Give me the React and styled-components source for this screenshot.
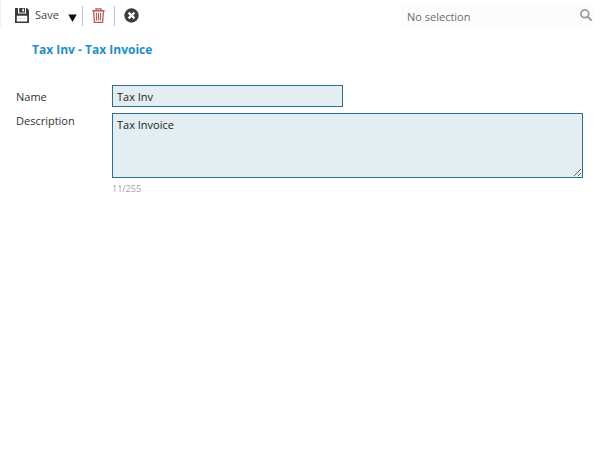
import React, { useState } from "react";
import styled, { createGlobalStyle } from "styled-components";

const MAX_LENGTH = 255;

function App() {
  const [name, setName] = useState("Tax Inv");
  const [description, setDescription] = useState("Tax Invoice");
  return (
    <>
      <GlobalStyle />
      <Toolbar>
        <Actions>
          <SaveButton type="button">
            <SaveIcon />
            Save
          </SaveButton>
          <ArrowButton type="button" aria-label="Save options">
            <svg width="9" height="8" viewBox="0 0 9 8">
              <path d="M0.3 0.5h8.4L4.5 8z" fill="#111" />
            </svg>
          </ArrowButton>
          <Divided>
            <IconButton type="button" aria-label="Delete">
              <TrashIcon />
            </IconButton>
          </Divided>
          <IconButton type="button" aria-label="Close">
            <CloseIcon />
          </IconButton>
        </Actions>
        <Search>
          <SearchInput placeholder="No selection" aria-label="Search" />
          <SearchButton type="button" aria-label="Find">
            <SearchIcon />
          </SearchButton>
        </Search>
      </Toolbar>
      <Title>Tax Inv - Tax Invoice</Title>
      <Form>
        <Label htmlFor="name">Name</Label>
        <NameInput
          id="name"
          value={name}
          onChange={(e) => setName(e.target.value)}
        />
        <Label htmlFor="description">Description</Label>
        <div>
          <DescriptionInput
            id="description"
            maxLength={MAX_LENGTH}
            value={description}
            onChange={(e) => setDescription(e.target.value)}
          />
          <Counter>
            {description.length}/{MAX_LENGTH}
          </Counter>
        </div>
      </Form>
    </>
  );
}

function SaveIcon() {
  return (
    <svg width="14" height="15" viewBox="0 0 14 15">
      <path
        fill="#3b3b3f"
        fillRule="evenodd"
        d="M0 0h3v5.6h8V0h0.8L14 2.2V15H0zM1.8 7.8v5.8h10.4V7.8z"
      />
      <path fill="#3b3b3f" d="M4.2 0h5.8v4.6H4.2z" />
      <path fill="#fff" d="M7.4 0.8h1.6v2.8H7.4z" />
      <path fill="#dededf" d="M3 10h8v1H3z" />
    </svg>
  );
}

function TrashIcon() {
  return (
    <svg width="13" height="15" viewBox="0 0 13 15" fill="none" stroke="#b85a57">
      <path d="M0.3 2.8h12.4" strokeWidth="1.5" />
      <path d="M4 2.6V0.8h5v1.8M1.6 3.2l0.8 11.1h8.2l0.8-11.1" strokeWidth="1.3" />
      <path d="M4.4 4.8l0.2 7.8M6.5 4.8v7.8M8.6 4.8l-0.2 7.8" strokeWidth="1.1" />
    </svg>
  );
}

function CloseIcon() {
  return (
    <svg width="15" height="15" viewBox="0 0 15 15">
      <circle cx="7.5" cy="7.5" r="7.2" fill="#3d3d3d" />
      <path d="M4.6 4.6l5.8 5.8M10.4 4.6l-5.8 5.8" stroke="#fff" strokeWidth="2.2" />
    </svg>
  );
}

function SearchIcon() {
  return (
    <svg width="12" height="12" viewBox="0 0 12 12" fill="none" stroke="#9a9a9a">
      <circle cx="4.8" cy="4.8" r="3.9" strokeWidth="1.7" />
      <path d="M7.6 7.6l3.4 3.4" strokeWidth="2" strokeLinecap="round" />
    </svg>
  );
}

export default App;

const GlobalStyle = createGlobalStyle`
  * {
    box-sizing: border-box;
  }
  body {
    margin: 0;
    background: #fff;
    color: #333;
  }
  body, button, input, textarea {
    font-family: "Open Sans", sans-serif;
    font-size: 11px;
    line-height: 16px;
  }
`;

const Toolbar = styled.header`
  display: flex;
  justify-content: space-between;
  height: 26px;
  padding: 0 6px 0 14px;
  border-left: 1px solid #eaeef8;
`;

const Actions = styled.div`
  display: flex;
  align-items: center;
  padding-top: 6px;
`;

const Button = styled.button`
  display: flex;
  align-items: center;
  padding: 0;
  border: 0;
  background: none;
  color: #444;
  cursor: pointer;
`;

const SaveButton = styled(Button)`
  gap: 6px;
  padding-bottom: 2px;
`;

const ArrowButton = styled(Button)`
  padding: 4px 5px 0 9px;
`;

const IconButton = styled(Button)`
  padding: 0 9px 1px;
`;

const Divided = styled.div`
  display: flex;
  height: 20px;
  border: solid #adc6f0;
  border-width: 0 1px;
`;

const Search = styled.div`
  display: flex;
  width: 192px;
  margin-top: 5px;
  background: #fcfcfc;
`;

const SearchInput = styled.input`
  flex: 1;
  min-width: 0;
  padding: 3px 5px 0;
  border: 0;
  background: none;
  &::placeholder {
    color: #6c6c6c;
    opacity: 1;
  }
`;

const SearchButton = styled(Button)`
  align-items: flex-start;
  padding: 4px 2px;
`;

const Title = styled.h1`
  margin: 15px 32px 26px;
  color: #1c8fc9;
  font-size: 12px;
  line-height: 18px;
`;

const Form = styled.form`
  display: grid;
  grid-template-columns: 96px 1fr;
  row-gap: 6px;
  padding: 0 17px 0 16px;
`;

const Label = styled.label`
  &:first-child {
    padding-top: 4px;
  }
`;

const NameInput = styled.input`
  width: 49%;
  height: 22px;
  padding: 0 4px;
  border: 1px solid #2c6f8c;
  background: #e3eef3;
  color: #222;
`;

const DescriptionInput = styled.textarea`
  display: block;
  width: 100%;
  height: 65px;
  padding: 3px 4px;
  border: 1px solid #2c6f8c;
  background: #e3eef3;
  color: #222;
  resize: vertical;
`;

const Counter = styled.div`
  margin-top: 3px;
  color: #a3a3a3;
  font-size: 9px;
`;
